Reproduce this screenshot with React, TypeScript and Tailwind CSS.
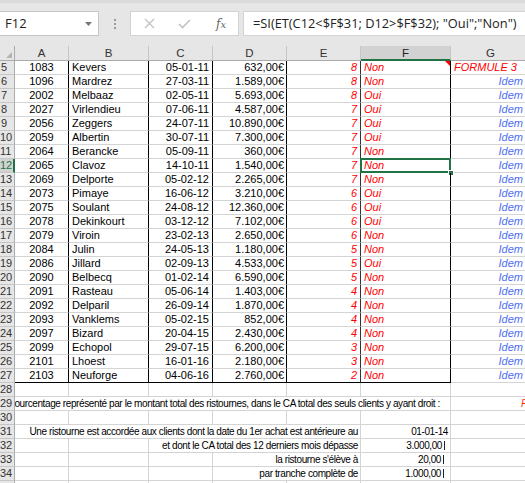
import React from 'react';

type Row = {
  n: number;
  a: string;
  b: string;
  c: string;
  d: string;
  e: string;
  f: string;
};

const rows: Row[] = [
  { n: 5, a: '1083', b: 'Kevers', c: '05-01-11', d: '632,00€', e: '8', f: 'Non' },
  { n: 6, a: '1096', b: 'Mardrez', c: '27-03-11', d: '1.589,00€', e: '8', f: 'Non' },
  { n: 7, a: '2002', b: 'Melbaaz', c: '02-05-11', d: '5.693,00€', e: '8', f: 'Oui' },
  { n: 8, a: '2027', b: 'Virlendieu', c: '07-06-11', d: '4.587,00€', e: '7', f: 'Oui' },
  { n: 9, a: '2056', b: 'Zeggers', c: '24-07-11', d: '10.890,00€', e: '7', f: 'Oui' },
  { n: 10, a: '2059', b: 'Albertin', c: '30-07-11', d: '7.300,00€', e: '7', f: 'Oui' },
  { n: 11, a: '2064', b: 'Berancke', c: '05-09-11', d: '360,00€', e: '7', f: 'Non' },
  { n: 12, a: '2065', b: 'Clavoz', c: '14-10-11', d: '1.540,00€', e: '7', f: 'Non' },
  { n: 13, a: '2069', b: 'Delporte', c: '05-02-12', d: '2.265,00€', e: '7', f: 'Non' },
  { n: 14, a: '2073', b: 'Pimaye', c: '16-06-12', d: '3.210,00€', e: '6', f: 'Oui' },
  { n: 15, a: '2075', b: 'Soulant', c: '24-08-12', d: '12.360,00€', e: '6', f: 'Oui' },
  { n: 16, a: '2078', b: 'Dekinkourt', c: '03-12-12', d: '7.102,00€', e: '6', f: 'Oui' },
  { n: 17, a: '2079', b: 'Viroin', c: '23-02-13', d: '2.650,00€', e: '6', f: 'Non' },
  { n: 18, a: '2084', b: 'Julin', c: '24-05-13', d: '1.180,00€', e: '5', f: 'Non' },
  { n: 19, a: '2086', b: 'Jillard', c: '02-09-13', d: '4.533,00€', e: '5', f: 'Oui' },
  { n: 20, a: '2090', b: 'Belbecq', c: '01-02-14', d: '6.590,00€', e: '5', f: 'Non' },
  { n: 21, a: '2091', b: 'Rasteau', c: '05-06-14', d: '1.403,00€', e: '4', f: 'Non' },
  { n: 22, a: '2092', b: 'Delparil', c: '26-09-14', d: '1.870,00€', e: '4', f: 'Non' },
  { n: 23, a: '2093', b: 'Vanklems', c: '05-02-15', d: '852,00€', e: '4', f: 'Non' },
  { n: 24, a: '2097', b: 'Bizard', c: '20-04-15', d: '2.430,00€', e: '4', f: 'Non' },
  { n: 25, a: '2099', b: 'Echopol', c: '29-07-15', d: '6.200,00€', e: '3', f: 'Non' },
  { n: 26, a: '2101', b: 'Lhoest', c: '16-01-16', d: '2.180,00€', e: '3', f: 'Non' },
  { n: 27, a: '2103', b: 'Neuforge', c: '04-06-16', d: '2.760,00€', e: '2', f: 'Non' },
];

const cellBase = 'h-[14px] shrink-0 border-r border-b flex items-center whitespace-nowrap overflow-hidden text-[11px] leading-[13px]';
// the notes under the table use a smaller, tighter face
const cellNote = 'h-[14px] shrink-0 border-r border-b border-[#d4d4d4] flex items-center whitespace-nowrap overflow-hidden text-[10px] tracking-[-0.4px] leading-[13px]';
const empty = `${cellBase} border-[#d4d4d4]`;

const RowHead = ({ n, active }: { n: number; active?: boolean }) => (
  <div
    className={
      active
        ? 'w-[15px] h-[14px] shrink-0 bg-[#d2d2d2] border-b border-[#c6c6c6] border-r-2 border-r-[#217346] text-[#217346] text-[11px] leading-[13px] overflow-hidden whitespace-nowrap'
        : 'w-[15px] h-[14px] shrink-0 bg-[#e6e6e6] border-b border-r border-[#c6c6c6] border-r-[#ababab] text-[#333] text-[11px] leading-[13px] overflow-hidden whitespace-nowrap'
    }
  >
    <span className={n < 10 ? 'pl-[1px]' : ''}>{n}</span>
  </div>
);

const Bar = () => <span className="inline-block w-[1px] h-[9px] bg-[#222] ml-[2px]" />;

const EmptyRow = ({ n }: { n: number }) => (
  <div className="flex">
    <RowHead n={n} />
    <div className={`${empty} w-[54px]`} />
    <div className={`${empty} w-[80px]`} />
    <div className={`${empty} w-[64px]`} />
    <div className={`${empty} w-[74px]`} />
    <div className={`${empty} w-[74px]`} />
    <div className={`${empty} w-[90px]`} />
    <div className={`${empty} w-[80px]`} />
  </div>
);

export default function App() {
  return (
    <div className="w-[525px] h-[483px] overflow-hidden bg-white font-['Liberation_Sans',Arial,sans-serif] text-black">
      {/* formula bar */}
      <div className="h-[46px] bg-[#e6e6e6] flex flex-col">
        <div className="h-[3px] bg-[#dadada]" />
        <div className="flex items-start pt-[8px]">
          <div className="w-[99px] h-[25px] shrink-0 bg-white border border-l-0 border-[#c6c6c6] flex items-center justify-between pl-[5px] pr-[6px]">
            <span className="font-['Open_Sans',sans-serif] text-[13px] text-[#222]">F12</span>
            <svg width="7" height="4" viewBox="0 0 7 4">
              <path d="M0 0 L7 0 L3.5 4 Z" fill="#777" />
            </svg>
          </div>
          <div className="w-[31px] h-[25px] shrink-0 flex flex-col items-center justify-center gap-[2px]">
            <span className="w-[2px] h-[2px] bg-[#9a9a9a]" />
            <span className="w-[2px] h-[2px] bg-[#9a9a9a]" />
            <span className="w-[2px] h-[2px] bg-[#9a9a9a]" />
          </div>
          <div className="w-[109px] h-[25px] shrink-0 bg-white border border-[#d4d4d4] flex items-center">
            <svg width="11" height="11" viewBox="0 0 11 11" className="ml-[13px]">
              <path d="M1 1 L10 10 M10 1 L1 10" stroke="#c2c2c2" strokeWidth="1.4" />
            </svg>
            <svg width="13" height="10" viewBox="0 0 13 10" className="ml-[23px]">
              <path d="M1 5 L4.5 8.5 L12 1" stroke="#c2c2c2" strokeWidth="1.6" fill="none" />
            </svg>
            <span className="ml-[25px] font-['DejaVu_Serif',serif] italic text-[12px] text-[#666] leading-none">
              f<span className="text-[10px]">x</span>
            </span>
          </div>
          <div className="flex-1 ml-[4px] h-[25px] bg-white border border-r-0 border-[#d4d4d4] flex items-center pl-[9px] whitespace-nowrap overflow-hidden">
            <span className="font-['Open_Sans',sans-serif] text-[12.8px] text-[#222]">
              =SI(ET(C12&lt;$F$31; D12&gt;$F$32); "Oui";"Non")
            </span>
          </div>
        </div>
      </div>

      {/* column headers */}
      <div className="flex h-[15px] bg-[#e6e6e6] text-[11.5px] leading-[14px] text-[#333]">
        <div className="w-[15px] shrink-0 border-r border-b border-[#ababab] flex items-end justify-end pr-[2px] pb-[2px]">
          <svg width="6" height="6" viewBox="0 0 6 6">
            <path d="M6 0 L6 6 L0 6 Z" fill="#b4b4b4" />
          </svg>
        </div>
        <div className="w-[54px] shrink-0 border-r border-b border-[#c6c6c6] border-b-[#ababab] text-center">A</div>
        <div className="w-[80px] shrink-0 border-r border-b border-[#c6c6c6] border-b-[#ababab] text-center">B</div>
        <div className="w-[64px] shrink-0 border-r border-b border-[#c6c6c6] border-b-[#ababab] text-center">C</div>
        <div className="w-[74px] shrink-0 border-r border-b border-[#c6c6c6] border-b-[#ababab] text-center">D</div>
        <div className="w-[74px] shrink-0 border-r border-b border-[#c6c6c6] border-b-[#ababab] text-center">E</div>
        <div className="w-[90px] shrink-0 border-r border-[#c6c6c6] bg-[#d2d2d2] border-b-2 border-b-[#217346] text-center text-[#222]">F</div>
        <div className="w-[80px] shrink-0 border-r border-b border-[#c6c6c6] border-b-[#ababab] text-center">G</div>
      </div>

      {/* data rows */}
      {rows.map((r) => {
        const last = r.n === 27;
        const bb = last ? 'border-b-black' : 'border-b-[#d4d4d4]';
        return (
          <div key={r.n} className="flex">
            <RowHead n={r.n} active={r.n === 12} />
            <div className={`${cellBase} w-[54px] justify-center border-r-black ${bb}`}>{r.a}</div>
            <div className={`${cellBase} w-[80px] pl-[3px] border-r-black ${bb}`}>{r.b}</div>
            <div className={`${cellBase} w-[64px] justify-end pr-[3px] border-r-black ${bb}`}>{r.c}</div>
            <div className={`${cellBase} w-[74px] justify-end pr-[2px] border-r-black ${bb}`}>{r.d}</div>
            <div className={`${cellBase} w-[74px] justify-end pr-[3px] border-r-[#333] ${bb} italic text-[#ff0000]`}>{r.e}</div>
            <div className={`${cellBase} relative overflow-visible w-[90px] pl-[3px] border-r-black ${bb} italic text-[#ff0000]`}>
              {r.f}
              {r.n === 5 && (
                <svg width="5" height="5" viewBox="0 0 5 5" className="absolute top-0 right-0">
                  <path d="M0 0 L5 0 L5 5 Z" fill="#ff0000" />
                </svg>
              )}
              {r.n === 12 && (
                <>
                  <span className="absolute left-[-1px] top-[-1px] w-[91px] h-[15px] border-2 border-[#217346]" />
                  <span className="absolute right-[-4px] bottom-[-4px] w-[6px] h-[6px] bg-[#217346] border border-white" />
                </>
              )}
            </div>
            <div
              className={`${cellBase} w-[80px] border-r-[#d4d4d4] border-b-[#d4d4d4] italic ${
                r.n === 5 ? 'pl-[3px] text-[#ff0000]' : 'justify-end pr-[7px] text-[#4d6ef5]'
              }`}
            >
              {r.n === 5 ? 'FORMULE 3' : 'Idem'}
            </div>
          </div>
        );
      })}

      <EmptyRow n={28} />

      {/* row 29 */}
      <div className="flex">
        <RowHead n={29} />
        <div className={`${cellNote} w-[436px] justify-end pr-[10px]`}>
          Pourcentage représenté par le montant total des ristournes, dans le CA total des seuls clients y ayant droit :
        </div>
        <div className={`${cellNote} w-[80px] pl-[70px] italic text-[#ff3300]`}>FORMULE 1</div>
      </div>

      <EmptyRow n={30} />

      {/* row 31 */}
      <div className="flex">
        <RowHead n={31} />
        <div className={`${cellNote} w-[346px] justify-end pr-[2px]`}>
          Une ristourne est accordée aux clients dont la date du 1er achat est antérieure au
        </div>
        <div className={`${cellNote} w-[90px] justify-end pr-[2px]`}>01-01-14</div>
        <div className={`${empty} w-[80px]`} />
      </div>

      {/* row 32 */}
      <div className="flex">
        <RowHead n={32} />
        <div className={`${empty} w-[54px]`} />
        <div className={`${empty} w-[80px]`} />
        <div className={`${cellNote} w-[212px] justify-end pr-[2px]`}>et dont le CA total des 12 derniers mois dépasse</div>
        <div className={`${cellNote} w-[90px] justify-end pr-[5px]`}>
          3.000,00 <Bar />
        </div>
        <div className={`${empty} w-[80px]`} />
      </div>

      {/* row 33 */}
      <div className="flex">
        <RowHead n={33} />
        <div className={`${empty} w-[54px]`} />
        <div className={`${empty} w-[80px]`} />
        <div className={`${empty} w-[64px]`} />
        <div className={`${cellNote} w-[148px] justify-end pr-[2px]`}>la ristourne s'élève à</div>
        <div className={`${cellNote} w-[90px] justify-end pr-[6px]`}>
          20,00
          <Bar />
        </div>
        <div className={`${empty} w-[80px]`} />
      </div>

      {/* row 34 */}
      <div className="flex">
        <RowHead n={34} />
        <div className={`${empty} w-[54px]`} />
        <div className={`${empty} w-[80px]`} />
        <div className={`${empty} w-[64px]`} />
        <div className={`${cellNote} w-[148px] justify-end pr-[2px]`}>par tranche complète de</div>
        <div className={`${cellNote} w-[90px] justify-end pr-[6px]`}>
          1.000,00
          <Bar />
        </div>
        <div className={`${empty} w-[80px]`} />
      </div>

      <EmptyRow n={35} />
    </div>
  );
}
